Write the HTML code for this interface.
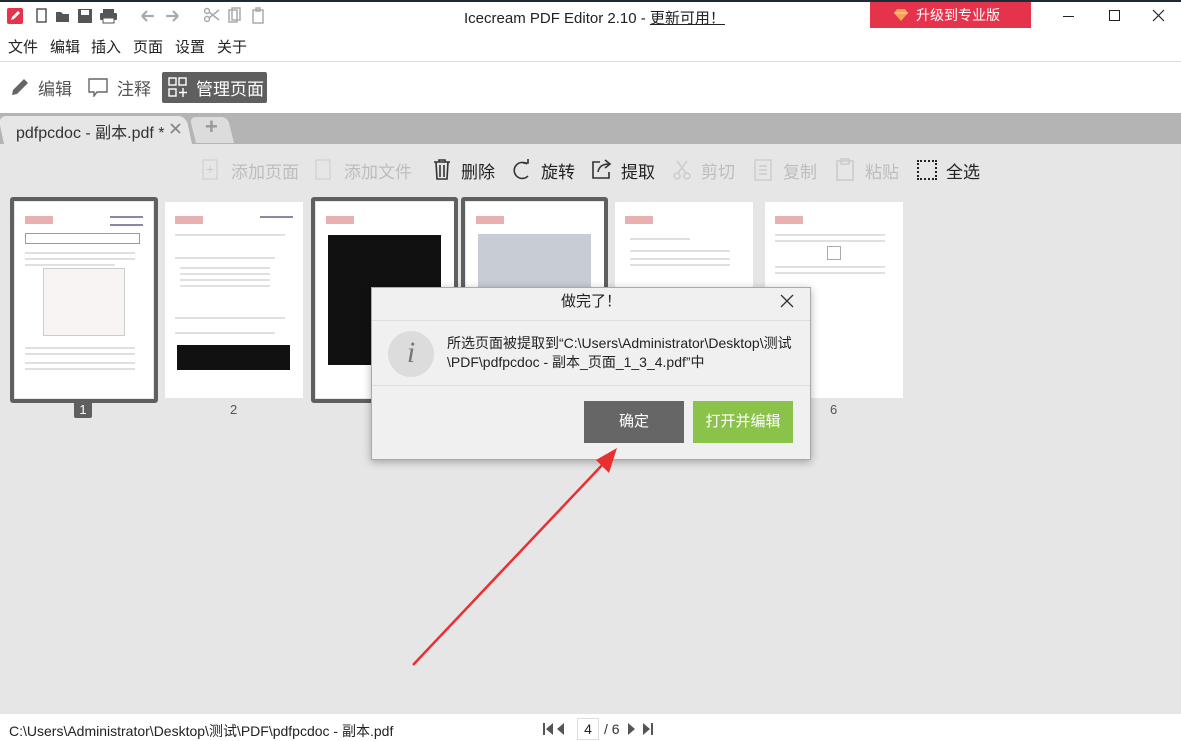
<!DOCTYPE html>
<html><head><meta charset="utf-8"><style>
*{margin:0;padding:0;box-sizing:border-box}
body{width:1181px;height:741px;overflow:hidden;background:#e6e6e6;font-family:"Liberation Sans","Noto Sans CJK SC",sans-serif;position:relative;color:#222}
.a{position:absolute}
.pg{position:absolute;background:#fff;width:138px;height:196px;top:202px;overflow:hidden}
.sel{position:absolute;top:197px;height:206px;border:4px solid #5f5f5f;border-radius:3px}
.ln{position:absolute;height:2px;background:#e0e0e0}
.tb{font-size:17px;color:#bdbdbd;position:absolute;top:158px}
.tb.on{color:#222}
.m{position:absolute;top:36px;font-size:15px}
</style></head><body>
<div class="a" style="left:0;top:0;width:1181px;height:62px;background:#fff"></div>
<div class="a" style="left:0;top:0;width:1181px;height:2px;background:#1e2a38"></div>
<div class="a" style="left:7px;top:8px;width:16px;height:16px;background:#e5334b;border-radius:2px"></div>
<svg class="a" style="left:7px;top:8px" width="16" height="16"><path d="M4 12l1-3 6-6 2 2-6 6z" fill="#fff"/></svg>
<svg class="a" style="left:34px;top:7px" width="90" height="18" fill="#555"><rect x="3" y="2" width="9" height="13" fill="none" stroke="#555" stroke-width="1.5"/><path d="M22 5h5l2 2h6v8H22z"/><rect x="44" y="2" width="14" height="14"/><rect x="47" y="3" width="8" height="5" fill="#fff"/><rect x="66" y="6" width="17" height="7" rx="1"/><rect x="69" y="2" width="11" height="4"/><rect x="69" y="11" width="11" height="5" fill="#fff" stroke="#555"/></svg>
<svg class="a" style="left:138px;top:8px" width="45" height="16" fill="none" stroke="#aaa" stroke-width="2.2"><path d="M4 8h12M4 8l5-5M4 8l5 5"/><path d="M40 8H28M40 8l-5-5M40 8l-5 5"/></svg>
<svg class="a" style="left:203px;top:7px" width="65" height="18" fill="none" stroke="#aaa" stroke-width="1.5"><circle cx="4" cy="12" r="2.5"/><circle cx="4" cy="4" r="2.5"/><path d="M6 5l10 8M6 11l10-8"/><rect x="26" y="3" width="8" height="12"/><rect x="29" y="1" width="8" height="12"/><rect x="50" y="3" width="10" height="13"/><rect x="53" y="1" width="4" height="3"/></svg>
<div class="a" style="left:464px;top:7px;font-size:15px;color:#222">Icecream PDF Editor 2.10 - <span style="text-decoration:underline">更新可用！</span></div>
<div class="a" style="left:870px;top:2px;width:161px;height:26px;background:#e5334b;color:#fff;font-size:14px;line-height:26px;padding-left:46px">升级到专业版</div>
<svg class="a" style="left:893px;top:8px" width="16" height="14"><path d="M1 5l3-4h8l3 4-7 8z" fill="#f5a35a"/><path d="M1 5h14" stroke="#f9d09a"/></svg>
<div class="a" style="left:1063px;top:16px;width:11px;height:1px;background:#222"></div>
<div class="a" style="left:1109px;top:10px;width:11px;height:11px;border:1px solid #222"></div>
<svg class="a" style="left:1152px;top:9px" width="13" height="13" stroke="#222" stroke-width="1.2"><path d="M1 1l11 11M12 1L1 12"/></svg>
<div class="m" style="left:8px">文件</div><div class="m" style="left:50px">编辑</div><div class="m" style="left:91px">插入</div><div class="m" style="left:133px">页面</div><div class="m" style="left:175px">设置</div><div class="m" style="left:217px">关于</div>
<div class="a" style="left:0;top:61px;width:1181px;height:1px;background:#ddd"></div>
<div class="a" style="left:0;top:62px;width:1181px;height:51px;background:#fff"></div>
<svg class="a" style="left:10px;top:77px" width="20" height="20"><path d="M2 18l1-5L14 2l4 4L7 17z" fill="#666"/></svg>
<div class="a" style="left:38px;top:75px;font-size:17px;color:#555">编辑</div>
<svg class="a" style="left:87px;top:77px" width="22" height="20" fill="none" stroke="#666" stroke-width="1.4"><path d="M2 2h18v13H10l-3 4v-4H2z"/></svg>
<div class="a" style="left:117px;top:75px;font-size:17px;color:#555">注释</div>
<div class="a" style="left:162px;top:72px;width:105px;height:31px;background:#5f5f5f;border-radius:2px"></div>
<svg class="a" style="left:168px;top:77px" width="20" height="21" fill="none" stroke="#fff" stroke-width="1.4"><rect x="1" y="1" width="7" height="7"/><rect x="11" y="1" width="7" height="7"/><rect x="1" y="12" width="7" height="7"/><path d="M15 11v9M11 15.5h8"/></svg>
<div class="a" style="left:196px;top:75px;font-size:17px;color:#fff">管理页面</div>
<div class="a" style="left:0;top:113px;width:1181px;height:31px;background:#b4b4b4"></div>
<div class="a" style="left:4px;top:116px;width:188px;height:28px;background:#e6e6e6;border-radius:8px 8px 0 0;transform:skewX(12deg);transform-origin:bottom"></div>
<div class="a" style="left:16px;top:119px;font-size:16px;color:#333">pdfpcdoc - 副本.pdf *</div>
<svg class="a" style="left:170px;top:123px" width="11" height="11" stroke="#888" stroke-width="1.8"><path d="M1 1l9 9M10 1L1 10"/></svg>
<div class="a" style="left:196px;top:117px;width:38px;height:26px;background:#dcdcdc;border-radius:6px 6px 0 0;transform:skewX(14deg);transform-origin:bottom"></div>
<div class="a" style="left:205px;top:114px;font-size:22px;color:#999;font-weight:bold">+</div>
<svg class="a" style="left:202px;top:159px" width="16" height="21" fill="none" stroke="#ccc"><rect x="1" y="1" width="14" height="19"/><path d="M8 7v7M4.5 10.5h7"/></svg>
<div class="tb" style="left:231px">添加页面</div>
<svg class="a" style="left:315px;top:159px" width="16" height="21" fill="none" stroke="#ccc"><rect x="1" y="1" width="14" height="19"/></svg>
<div class="tb" style="left:344px">添加文件</div>
<svg class="a" style="left:432px;top:158px" width="20" height="23" fill="none" stroke="#333" stroke-width="1.6"><path d="M2 4h16M7 4V2h6v2M4 4l1 17h10l1-17M8 7v12M12 7v12"/></svg>
<div class="tb on" style="left:461px">删除</div>
<svg class="a" style="left:512px;top:159px" width="20" height="22" fill="none" stroke="#333" stroke-width="1.6"><path d="M15 5A8 8 0 1 0 16 17"/><path d="M11 4h5V0"/></svg>
<div class="tb on" style="left:541px">旋转</div>
<svg class="a" style="left:591px;top:158px" width="22" height="22" fill="none" stroke="#333" stroke-width="1.6"><path d="M9 4H2v16h16v-6"/><path d="M7 14c1-6 5-8 11-8M14 2l5 4-5 4"/></svg>
<div class="tb on" style="left:621px">提取</div>
<svg class="a" style="left:673px;top:160px" width="18" height="20" fill="none" stroke="#ccc" stroke-width="1.5"><circle cx="4" cy="16" r="3"/><circle cx="14" cy="16" r="3"/><path d="M5 13L14 1M13 13L4 1"/></svg>
<div class="tb" style="left:701px">剪切</div>
<svg class="a" style="left:754px;top:159px" width="18" height="22" fill="none" stroke="#ccc" stroke-width="1.4"><rect x="1" y="1" width="16" height="20"/><path d="M5 7h8M5 11h8M5 15h8"/></svg>
<div class="tb" style="left:783px">复制</div>
<svg class="a" style="left:836px;top:158px" width="18" height="23" fill="none" stroke="#ccc" stroke-width="1.6"><rect x="1" y="3" width="16" height="19"/><rect x="5" y="1" width="8" height="5"/></svg>
<div class="tb" style="left:865px">粘贴</div>
<div class="a" style="left:917px;top:160px;width:20px;height:20px;border:2px dotted #222"></div>
<div class="tb on" style="left:946px">全选</div>
<div class="sel" style="left:10px;width:148px"></div>
<div class="sel" style="left:311px;width:147px"></div>
<div class="sel" style="left:461px;width:147px"></div>
<div class="pg" style="left:15px">
 <div class="a" style="left:10px;top:14px;width:28px;height:8px;background:#e8b0b0"></div>
 <div class="a" style="left:95px;top:14px;width:33px;height:2px;background:#88a"></div>
 <div class="a" style="left:95px;top:22px;width:33px;height:2px;background:#88a"></div>
 <div class="a" style="left:10px;top:31px;width:115px;height:11px;border:1px solid #e77"></div>
 <div class="ln" style="left:10px;top:50px;width:110px"></div><div class="ln" style="left:10px;top:56px;width:110px"></div><div class="ln" style="left:10px;top:62px;width:90px"></div>
 <div class="a" style="left:28px;top:66px;width:82px;height:68px;border:1px solid #ccc;background:#f8f4f4"></div>
 <div class="ln" style="left:10px;top:145px;width:110px"></div><div class="ln" style="left:10px;top:151px;width:110px"></div><div class="ln" style="left:10px;top:160px;width:110px"></div><div class="ln" style="left:10px;top:166px;width:110px"></div>
</div>
<div class="pg" style="left:165px">
 <div class="a" style="left:10px;top:14px;width:28px;height:8px;background:#e8b0b0"></div>
 <div class="a" style="left:95px;top:14px;width:33px;height:2px;background:#88a"></div>
 <div class="ln" style="left:10px;top:32px;width:110px"></div><div class="ln" style="left:10px;top:55px;width:100px"></div><div class="ln" style="left:15px;top:65px;width:90px"></div><div class="ln" style="left:15px;top:71px;width:90px"></div><div class="ln" style="left:15px;top:77px;width:90px"></div><div class="ln" style="left:15px;top:83px;width:90px"></div>
 <div class="ln" style="left:10px;top:115px;width:110px"></div><div class="ln" style="left:10px;top:130px;width:100px"></div>
 <div class="a" style="left:12px;top:143px;width:113px;height:25px;background:#111"></div>
</div>
<div class="pg" style="left:316px">
 <div class="a" style="left:10px;top:14px;width:28px;height:8px;background:#e8b0b0"></div>
 <div class="a" style="left:12px;top:33px;width:113px;height:130px;background:#111"></div>
</div>
<div class="pg" style="left:466px">
 <div class="a" style="left:10px;top:14px;width:28px;height:8px;background:#e8b0b0"></div>
 <div class="a" style="left:12px;top:32px;width:113px;height:60px;background:#c8ccd4"></div>
</div>
<div class="pg" style="left:615px">
 <div class="a" style="left:10px;top:14px;width:28px;height:8px;background:#e8b0b0"></div>
 <div class="ln" style="left:15px;top:36px;width:60px"></div><div class="ln" style="left:15px;top:48px;width:100px"></div><div class="ln" style="left:15px;top:56px;width:100px"></div><div class="ln" style="left:15px;top:62px;width:100px"></div>
</div>
<div class="pg" style="left:765px">
 <div class="a" style="left:10px;top:14px;width:28px;height:8px;background:#e8b0b0"></div>
 <div class="ln" style="left:10px;top:32px;width:110px"></div><div class="ln" style="left:10px;top:38px;width:110px"></div>
 <div class="a" style="left:62px;top:44px;width:14px;height:14px;border:1px solid #aaa"></div>
 <div class="ln" style="left:10px;top:64px;width:110px"></div><div class="ln" style="left:10px;top:70px;width:110px"></div>
</div>
<div class="a" style="left:74px;top:402px;width:18px;height:16px;background:#5f5f5f;color:#fff;font-size:13px;text-align:center;line-height:16px;border-radius:0 0 2px 2px">1</div>
<div class="a" style="left:230px;top:402px;font-size:13px;color:#555">2</div>
<div class="a" style="left:830px;top:402px;font-size:13px;color:#555">6</div>
<div class="a" style="left:371px;top:287px;width:440px;height:173px;background:#f0f0f0;border:1px solid #aaa;box-shadow:0 2px 8px rgba(0,0,0,.3)"></div>
<div class="a" style="left:372px;top:288px;width:438px;height:32px;font-size:15px;text-align:center;line-height:28px">做完了！</div>
<svg class="a" style="left:780px;top:294px" width="14" height="14" stroke="#333" stroke-width="1.3"><path d="M1 1l12 12M13 1L1 13"/></svg>
<div class="a" style="left:372px;top:320px;width:438px;height:1px;background:#ddd"></div>
<div class="a" style="left:388px;top:331px;width:46px;height:46px;border-radius:50%;background:#dcdcdc;color:#777;font:italic 30px 'Liberation Serif',serif;text-align:center;line-height:44px">i</div>
<div class="a" style="left:447px;top:334px;font-size:14px;line-height:19px;color:#222">所选页面被提取到“C:\Users\Administrator\Desktop\测试<br>\PDF\pdfpcdoc - 副本_页面_1_3_4.pdf”中</div>
<div class="a" style="left:372px;top:385px;width:438px;height:1px;background:#ddd"></div>
<div class="a" style="left:584px;top:401px;width:100px;height:42px;background:#666;color:#fff;font-size:15px;text-align:center;line-height:42px">确定</div>
<div class="a" style="left:693px;top:401px;width:100px;height:42px;background:#8bc34a;color:#fff;font-size:15px;text-align:center;line-height:42px">打开并编辑</div>
<svg class="a" style="left:400px;top:440px" width="230" height="240"><path d="M13 225L205 22" stroke="#e83030" stroke-width="2.5"/><path d="M217 8L196 20L209 33z" fill="#e83030"/></svg>
<div class="a" style="left:0;top:714px;width:1181px;height:27px;background:#fff"></div>
<div class="a" style="left:9px;top:721px;font-size:14px;color:#222">C:\Users\Administrator\Desktop\测试\PDF\pdfpcdoc - 副本.pdf</div>
<svg class="a" style="left:542px;top:722px" width="30" height="14" fill="#555"><rect x="1" y="1" width="2" height="12"/><path d="M11 1v12L4 7z"/><path d="M22 1v12L15 7z"/></svg>
<div class="a" style="left:577px;top:718px;width:22px;height:22px;border:1px solid #ddd;font-size:14px;text-align:center;line-height:21px">4</div>
<div class="a" style="left:604px;top:721px;font-size:14px;color:#333">/ 6</div>
<svg class="a" style="left:626px;top:722px" width="30" height="14" fill="#555"><path d="M2 1v12L9 7z"/><path d="M17 1v12L24 7z"/><rect x="25" y="1" width="2" height="12"/></svg>
</body></html>
